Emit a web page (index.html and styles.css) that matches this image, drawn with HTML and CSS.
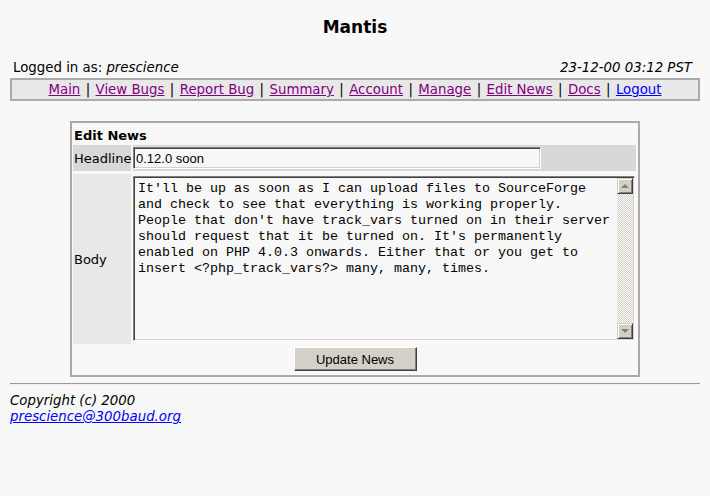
FILE: index.html
```html
<!DOCTYPE html>
<html>
<head>
<meta charset="utf-8">
<title>Mantis</title>
<link rel="stylesheet" href="styles.css">
</head>
<body>
<div class="page">
  <h1 class="title">Mantis</h1>
  <div class="userbar">
    <span>Logged in as: <i>prescience</i></span>
    <i class="date">23-12-00 03:12 PST</i>
  </div>
  <nav class="menu">
    <a href="#" class="v">Main</a><span class="sep">|</span><a href="#" class="v">View Bugs</a><span class="sep">|</span><a href="#" class="v">Report Bug</a><span class="sep">|</span><a href="#" class="v">Summary</a><span class="sep">|</span><a href="#" class="v">Account</a><span class="sep">|</span><a href="#" class="v">Manage</a><span class="sep">|</span><a href="#" class="v">Edit News</a><span class="sep">|</span><a href="#" class="v">Docs</a><span class="sep">|</span><a href="#" class="u">Logout</a>
  </nav>

  <form class="panel">
    <div class="panel-title">Edit News</div>
    <div class="grid">
      <div class="label dark">Headline</div>
      <div class="field dark"><input class="text" type="text" value="0.12.0 soon"></div>
      <div class="label light">Body</div>
      <div class="field body">
        <div class="tawrap">
          <textarea class="ta">It'll be up as soon as I can upload files to SourceForge
and check to see that everything is working properly.
People that don't have track_vars turned on in their server
should request that it be turned on. It's permanently
enabled on PHP 4.0.3 onwards. Either that or you get to
insert &lt;?php_track_vars?&gt; many, many, times.</textarea>
          <div class="sb">
            <div class="sbtn"><span class="arr up"></span></div>
            <div class="track"></div>
            <div class="sbtn"><span class="arr down"></span></div>
          </div>
        </div>
      </div>
    </div>
    <div class="actions"><button type="button" class="btn">Update News</button></div>
  </form>

  <hr class="rule">
  <div class="foot">
    <i>Copyright (c) 2000</i><br>
    <a href="#" class="mail">prescience@300baud.org</a>
  </div>
</div>
</body>
</html>
```
FILE: styles.css
```css
html, body { margin: 0; padding: 0; background: #f8f8f8; }
body { font-family: "DejaVu Sans", Verdana, sans-serif; font-size: 13.33px; color: #000; }
.page { padding: 0 10px; }
.title { margin: 0; padding-top: 16px; height: 22px; text-align: center; font-size: 17px; font-weight: bold; line-height: 22px; }
.userbar { display: flex; justify-content: space-between; margin-top: 22px; padding: 0 8px 0 3px; height: 16px; line-height: 16px; }
.menu { margin-top: 2px; border: 2px solid #aaa; background: #e8e8e8; height: 19px; line-height: 20px; text-align: center; white-space: nowrap; }
.menu a { text-decoration: underline; }
.sep { margin: 0 5.4px; }
.v { color: #800080; }
.u { color: #0000ff; }
.panel { width: 566px; margin: 20px auto 0; border: 2px solid #aaa; padding: 0; }
.panel-title { font-size: 13px; font-weight: bold; height: 22px; line-height: 26px; padding-left: 2px; }
.grid { display: grid; grid-template-columns: 58px 1fr; gap: 3px 2px; padding: 0 2px 0 1px; }
.label { display: flex; align-items: center; padding-left: 1px; font-size: 13px; }
.dark { background: #d8d8d8; }
.light { background: #e8e8e8; }
.field { padding: 2px 0; }
.field.body { padding: 2px 0 3px; }
.text { box-sizing: border-box; width: 408px; height: 22px; margin: 0; padding: 0 2px; font-family: "Liberation Sans", Arial, sans-serif; font-size: 13px; background: #f8f8f8; border: 1px solid; border-color: #808080 #fff #fff #808080; box-shadow: inset 1px 1px 0 #404040, inset -1px -1px 0 #d4d0c8; outline: none; }
.tawrap { display: flex; width: 502px; height: 165px; box-sizing: border-box; border: 1px solid; border-color: #808080 #fff #fff #808080; box-shadow: inset 1px 1px 0 #404040, inset -1px -1px 0 #d4d0c8; padding: 1px; background: #f8f8f8; }
.ta { flex: 1; border: 0; margin: 0; padding: 3px 3px 2px; resize: none; overflow: hidden; background: transparent; font-family: "Liberation Mono", "Courier New", monospace; font-size: 13.33px; line-height: 16px; outline: none; white-space: pre; }
.sb { width: 16px; display: flex; flex-direction: column; }
.sbtn { height: 16px; box-sizing: border-box; background: #d4d0c8; border: 1px solid; border-color: #d4d0c8 #404040 #404040 #d4d0c8; box-shadow: inset 1px 1px 0 #fff, inset -1px -1px 0 #808080; display: flex; align-items: center; justify-content: center; }
.track { flex: 1; background: repeating-conic-gradient(#fff 0 25%, #d4d0c8 0 50%) 0 0 / 2px 2px; }
.arr { width: 0; height: 0; border-left: 4px solid transparent; border-right: 4px solid transparent; }
.up { border-bottom: 4px solid #808080; }
.down { border-top: 4px solid #808080; }
.actions { display: flex; justify-content: center; padding: 3px 0 4px; }
.btn { width: 123px; height: 24px; margin: 0; padding: 0; font-family: "Liberation Sans", Arial, sans-serif; font-size: 13px; color: #000; background: #d4d0c8; border: 1px solid; border-color: #fff #404040 #404040 #fff; box-shadow: inset -1px -1px 0 #808080; }
.rule { margin: 6px 0 0; border: 0; border-top: 1px solid #999; border-bottom: 1px solid #f0f0f0; height: 0; }
.foot { padding-top: 8px; line-height: 16px; }
.mail { color: #0000ff; font-style: italic; }
```
